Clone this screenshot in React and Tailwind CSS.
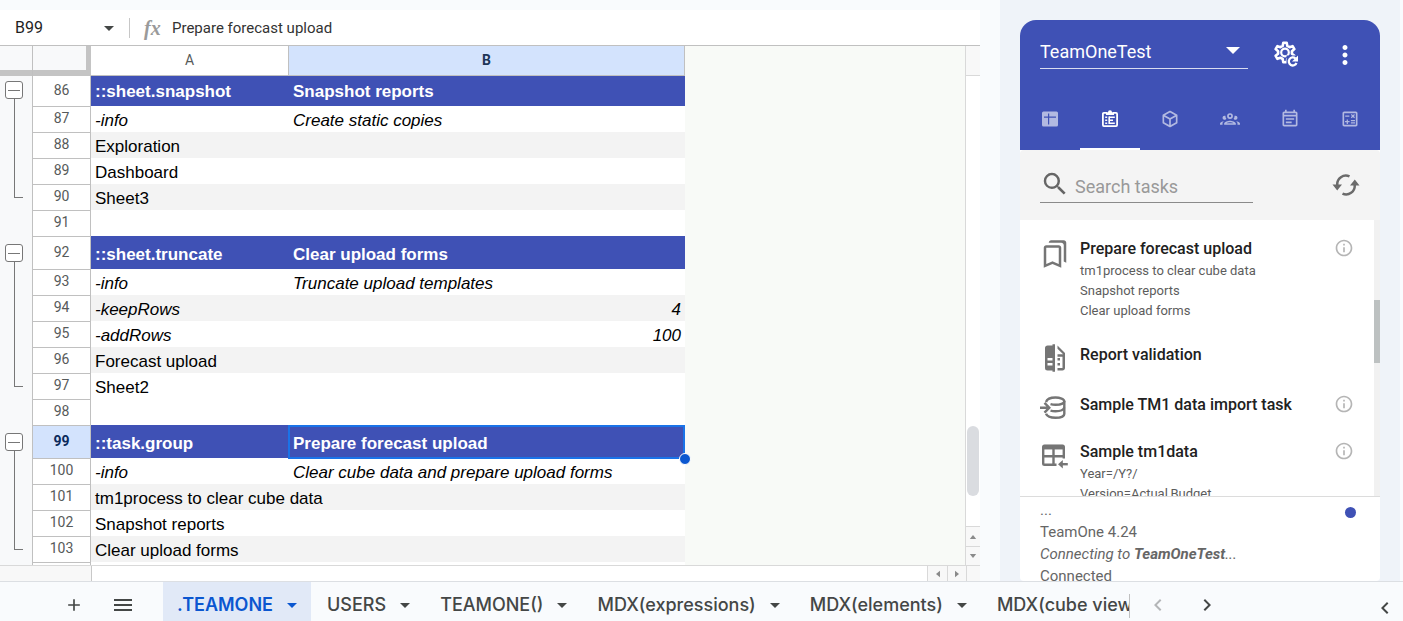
import React from "react";
import {
  MdOutlineEventNote,
  MdOutlineCalculate,
  MdSearch,
  MdOutlineBookmarks,
  MdInfoOutline,
  MdMoreVert,
  MdArrowDropDown,
  MdChevronLeft,
  MdChevronRight,
  MdAdd,
  MdMenu,
} from "react-icons/md";

const ROWS = [
  { n: 86, a: "::sheet.snapshot", b: "Snapshot reports", kind: "head", h: "h-[30px]" },
  { n: 87, a: "-info", b: "Create static copies", kind: "opt" },
  { n: 88, a: "Exploration", shade: true },
  { n: 89, a: "Dashboard" },
  { n: 90, a: "Sheet3", shade: true },
  { n: 91 },
  { n: 92, a: "::sheet.truncate", b: "Clear upload forms", kind: "head", h: "h-[33px]" },
  { n: 93, a: "-info", b: "Truncate upload templates", kind: "opt" },
  { n: 94, a: "-keepRows", b: "4", kind: "opt", num: true, shade: true },
  { n: 95, a: "-addRows", b: "100", kind: "opt", num: true },
  { n: 96, a: "Forecast upload", shade: true },
  { n: 97, a: "Sheet2" },
  { n: 98 },
  { n: 99, a: "::task.group", b: "Prepare forecast upload", kind: "head", h: "h-[33px]", active: true },
  { n: 100, a: "-info", b: "Clear cube data and prepare upload forms", kind: "opt" },
  { n: 101, a: "tm1process to clear cube data", shade: true },
  { n: 102, a: "Snapshot reports" },
  { n: 103, a: "Clear upload forms", shade: true },
];

const GROUPS = [
  { box: "h-[160px] pt-[5px]", line: "h-[99px]" },
  { box: "h-[189px] pt-2", line: "h-[125px]" },
  { box: "h-[137px] pt-2", line: "h-[99px]" },
];

function FormulaBar() {
  return (
    <div className="flex h-9 shrink-0 items-center border-b border-[#c0c0c0] bg-white font-['Roboto',sans-serif]">
      <button className="flex h-full w-[129px] items-center justify-between pl-[15px] pr-2 text-base text-[#1f1f1f]">
        B99
        <MdArrowDropDown className="size-6 text-[#444746]" />
      </button>
      <span className="h-5 w-px bg-[#c7c7c7]" />
      <span className="w-[42px] pl-[14px] font-['Liberation_Serif',serif] text-xl font-bold italic leading-none text-[#9a9a9a]">
        fx
      </span>
      <input
        aria-label="Formula"
        defaultValue="Prepare forecast upload"
        className="h-full min-w-0 flex-1 bg-transparent text-[15px] text-[#333] outline-none"
      />
    </div>
  );
}

function Gutter() {
  return (
    <div className="flex w-[33px] shrink-0 flex-col border-r border-[#c0c0c0] bg-[#f8f9fa]">
      <div className="h-[30px] border-b-[6px] border-[#c4c4c4]" />
      {GROUPS.map((g, i) => (
        <div key={i} className={"flex flex-col pl-[5px] " + g.box}>
          <button
            aria-label="Collapse group"
            className="flex size-[18px] shrink-0 items-center justify-center rounded-[3px] border border-[#777] bg-white"
          >
            <span className="h-px w-3 bg-[#777]" />
          </button>
          <span className={"ml-[9px] w-[9px] border-b border-l border-[#777] " + g.line} />
        </div>
      ))}
    </div>
  );
}

function Row({ row, first }) {
  const head = row.kind === "head";
  const tone = head
    ? "bg-[#3f51b5] font-bold text-white"
    : (row.shade ? "bg-[#f3f3f3]" : "bg-white") +
      (row.kind === "opt" ? " italic text-black" : " text-black");
  const cell = "whitespace-nowrap align-bottom leading-[22px] " + (head ? "pb-[3px] " : "");
  return (
    <tr className={(row.h || "h-[26px]") + " " + tone}>
      <th
        scope="row"
        className={
          "border-r border-[#c0c0c0] p-0 pb-[3px] text-center font-['Roboto',sans-serif] text-sm leading-5 not-italic " +
          (first ? "" : "border-t ") +
          (row.active ? "bg-[#d3e3fd] font-bold text-[#0b2a5c]" : "bg-white font-normal text-[#575a5a]")
        }
      >
        {row.n}
      </th>
      <td className={"pl-1 " + cell}>{row.a}</td>
      <td className={"relative " + cell + (row.num ? "pr-1 text-right" : "pl-1")}>
        {row.b}
        {row.active && (
          <>
            <span className="absolute -bottom-px -left-px right-0 top-0 border-2 border-[#1a73e8]" />
            <span className="absolute -bottom-[7px] -right-[6px] z-10 size-3 rounded-full border border-white bg-[#0b57d0]" />
          </>
        )}
      </td>
    </tr>
  );
}

function Sheet() {
  return (
    <section className="flex min-h-0 flex-1 flex-col">
      <div className="flex min-h-0 flex-1 overflow-hidden border-b border-[#d9d9d9]">
        <Gutter />
        <table className="w-[652px] shrink-0 table-fixed border-separate border-spacing-0 self-start font-['Liberation_Sans',sans-serif] text-[17px]">
          <colgroup>
            <col className="w-[58px]" />
            <col className="w-[198px]" />
            <col className="w-[396px]" />
          </colgroup>
          <thead>
            <tr className="h-[30px] font-['Roboto',sans-serif] text-sm">
              <th aria-label="Select all" className="border-b-[6px] border-r-[5px] border-[#c4c4c4] bg-[#f8f9fa] p-0" />
              <th className="border-b border-r border-[#c0c0c0] bg-white p-0 pb-[2px] font-normal text-[#575a5a]">A</th>
              <th className="border-b border-r border-[#c0c0c0] bg-[#d3e3fd] p-0 pb-[2px] font-bold text-[#1d3557]">B</th>
            </tr>
          </thead>
          <tbody>
            {ROWS.map((r, i) => (
              <Row key={r.n} row={r} first={i === 0} />
            ))}
            <tr className="h-[26px] bg-white">
              <th className="border-r border-t border-[#c0c0c0] p-0" />
              <td />
              <td />
            </tr>
          </tbody>
        </table>
        <div className="flex-1 border-r border-[#d9d9d9] bg-[#f8faf7]" />
        <div className="flex w-[14px] shrink-0 flex-col bg-white">
          <div className="h-[30px] border-b border-[#d9d9d9] bg-[#f8f8f8]" />
          <div className="flex flex-1 flex-col justify-end px-px pb-[30px]">
            <span className="h-[70px] rounded-full bg-[#dadce0]" />
          </div>
          <button aria-label="Scroll up" className="flex h-5 items-center justify-center border-t border-[#d9d9d9] bg-[#f8f8f8]">
            <svg viewBox="0 0 8 5" className="h-1 w-2 fill-[#8a8a8a]"><path d="M4 0 8 5H0z" /></svg>
          </button>
          <button aria-label="Scroll down" className="flex h-[19px] items-center justify-center border-t border-[#d9d9d9] bg-[#f8f8f8]">
            <svg viewBox="0 0 8 5" className="h-1 w-2 fill-[#8a8a8a]"><path d="M0 0H8L4 5z" /></svg>
          </button>
        </div>
      </div>
      <div className="flex h-[15px] shrink-0 bg-white">
        <div className="w-[92px] border-r border-[#c8c8c8] bg-[#f8f8f8]" />
        <div className="flex-1" />
        <button aria-label="Scroll left" className="flex w-5 items-center justify-center border-l border-[#d9d9d9] bg-[#f8f8f8]">
          <svg viewBox="0 0 5 8" className="h-2 w-1 fill-[#8a8a8a]"><path d="M5 0V8L0 4z" /></svg>
        </button>
        <button aria-label="Scroll right" className="flex w-5 items-center justify-center border-x border-[#d9d9d9] bg-[#f8f8f8]">
          <svg viewBox="0 0 5 8" className="h-2 w-1 fill-[#8a8a8a]"><path d="M0 0V8L5 4z" /></svg>
        </button>
        <div className="w-[13px] bg-[#f8f8f8]" />
      </div>
    </section>
  );
}

const TABS = ["USERS", "TEAMONE()", "MDX(expressions)", "MDX(elements)", "MDX(cube views)"];

function SheetTabs() {
  return (
    <footer className="flex h-10 shrink-0 items-center border-t border-[#dcdfe3] bg-[#f9fbfd] font-['Inter',sans-serif] text-lg font-medium text-[#444746]">
      <button aria-label="Add sheet" className="ml-[62px] flex h-full w-6 items-center justify-center pt-[6px]">
        <MdAdd className="size-5" />
      </button>
      <button aria-label="All sheets" className="ml-[25px] flex h-full w-6 items-center justify-center pt-[6px]">
        <MdMenu className="size-6" />
      </button>
      <div className="ml-7 flex h-full w-[966px] items-center overflow-hidden">
        <button className="flex h-full shrink-0 items-center gap-[7px] bg-[#e1e9f7] pl-[14px] pr-[7px] pt-[6px] font-semibold text-[#0b57d0]">
          .TEAMONE
          <MdArrowDropDown className="size-6" />
        </button>
        {TABS.map((t) => (
          <button key={t} className="flex h-full shrink-0 items-center gap-[7px] pl-4 pr-[7px] pt-[6px]">
            {t}
            <MdArrowDropDown className="size-6" />
          </button>
        ))}
      </div>
      <span className="mt-2 h-6 w-px bg-[#c0c0c0]" />
      <button aria-label="Previous sheets" className="ml-4 pt-[6px] text-[#b4b6b8]">
        <MdChevronLeft className="size-6" />
      </button>
      <button aria-label="Next sheets" className="ml-[25px] pt-[6px]">
        <MdChevronRight className="size-6" />
      </button>
      <button aria-label="Show side panel" className="ml-auto mr-[6px] pt-3">
        <MdChevronLeft className="size-6" />
      </button>
    </footer>
  );
}

function TableIcon() {
  return (
    <svg viewBox="0 0 20 20" className="size-5">
      <path fill="currentColor" fillRule="evenodd" d="M3.5 2.5h13A1.5 1.5 0 0 1 18 4v12a1.5 1.5 0 0 1-1.5 1.5h-13A1.5 1.5 0 0 1 2 16V4a1.5 1.5 0 0 1 1.500-1.500ZM8 4.500V7.500H4V8.700H8V15.500H9.200V8.700H16V7.500H9.200V4.500Z" />
    </svg>
  );
}

function ClipboardIcon() {
  return (
    <svg viewBox="0 0 20 20" className="size-5" fill="none" stroke="currentColor">
      <path strokeWidth="1.8" d="M7 3.900H3.900Q2.900 3.900 2.900 4.900V16.100Q2.900 17.100 3.900 17.100H16.100Q17.100 17.100 17.100 16.100V4.900Q17.100 3.900 16.100 3.900H13" />
      <path fill="currentColor" stroke="none" d="M6 6V3.200H8A2 2 0 0 1 12 3.200H14V6Z" />
      <path strokeWidth="1.600" d="M5.200 8.200H7.200M5.200 11.200H7.200M5.200 14.200H7.200M9 8.200H14.800M9 11.200H13M9 14.200H14.800" />
      <path strokeWidth="1.600" d="M9.200 7.400V15" />
    </svg>
  );
}

function CubeIcon() {
  return (
    <svg viewBox="0 0 24 24" className="size-5" fill="currentColor">
      <path d="M21,16.5C21,16.88 20.79,17.21 20.47,17.38L12.57,21.82C12.41,21.94 12.21,22 12,22C11.79,22 11.59,21.94 11.43,21.82L3.53,17.38C3.21,17.21 3,16.88 3,16.5V7.5C3,7.12 3.21,6.79 3.53,6.62L11.43,2.18C11.59,2.06 11.79,2 12,2C12.21,2 12.41,2.06 12.57,2.18L20.47,6.62C20.79,6.79 21,7.12 21,7.5V16.5M12,4.15L6.04,7.5L12,10.85L17.96,7.5L12,4.15M5,15.91L11,19.29V12.58L5,9.21V15.91M19,15.91V9.21L13,12.58V19.29L19,15.91Z" />
    </svg>
  );
}

function GroupIcon() {
  return (
    <svg viewBox="0 0 24 24" className="size-5" fill="currentColor">
      <path d="M12,5A3.5,3.5 0 0,0 8.5,8.5A3.5,3.5 0 0,0 12,12A3.5,3.5 0 0,0 15.5,8.5A3.5,3.5 0 0,0 12,5M12,7A1.5,1.5 0 0,1 13.5,8.5A1.5,1.5 0 0,1 12,10A1.5,1.5 0 0,1 10.5,8.5A1.5,1.5 0 0,1 12,7M5.5,8A2.5,2.5 0 0,0 3,10.5C3,11.44 3.53,12.25 4.29,12.68C4.65,12.88 5.06,13 5.5,13C5.94,13 6.35,12.88 6.71,12.68C7.08,12.47 7.39,12.17 7.62,11.81C6.89,10.86 6.5,9.7 6.5,8.5C6.5,8.41 6.5,8.31 6.5,8.22C6.2,8.08 5.86,8 5.5,8M18.5,8C18.14,8 17.8,8.08 17.5,8.22C17.5,8.31 17.5,8.41 17.5,8.5C17.5,9.7 17.11,10.86 16.38,11.81C16.5,12 16.63,12.15 16.78,12.3C16.94,12.45 17.1,12.58 17.29,12.68C17.65,12.88 18.06,13 18.5,13C18.94,13 19.35,12.88 19.71,12.68C20.47,12.25 21,11.44 21,10.5A2.5,2.5 0 0,0 18.5,8M12,14C9.66,14 5,15.17 5,17.5V19H19V17.5C19,15.17 14.34,14 12,14M4.71,14.55C2.78,14.78 0,15.76 0,17.5V19H3V17.07C3,16.06 3.69,15.22 4.71,14.55M19.29,14.55C20.31,15.22 21,16.06 21,17.07V19H24V17.5C24,15.76 21.22,14.78 19.29,14.55M12,16C13.53,16 15.24,16.5 16.23,17H7.77C8.76,16.5 10.47,16 12,16Z" />
    </svg>
  );
}

function CogRefreshIcon() {
  return (
    <svg viewBox="0 0 28 28" className="size-7" fill="none" stroke="#fff">
      <path strokeWidth="2.600" strokeLinejoin="round" d="M11.300 2.800h3.400l.6 3.100 2.300 1.300 3-1.100 1.800 3-2.500 2.100v2.600l2.500 2-1.800 3-3-1.100-2.300 1.300-.6 3.200h-3.400l-.6-3.200-2.300-1.300-3 1.100-1.800-3 2.500-2v-2.600L3.600 9.100l1.800-3 3 1.100 2.300-1.300Z" />
      <circle cx="13" cy="12.500" r="3.800" strokeWidth="2.200" />
      <path fill="#3f51b5" stroke="none" d="M14.500 15.500H28V28H14.500Z" />
      <path strokeWidth="2.300" d="M23.500 18.500A4 4 0 1 0 24.500 23" />
      <path fill="#fff" stroke="none" d="M26 15.500V21.500H20Z" />
    </svg>
  );
}

function RefreshIcon() {
  return (
    <svg viewBox="0 0 28 24" className="h-6 w-7" fill="none" stroke="#6b6b6b" strokeWidth="2.500">
      <path d="M17.500 3.400A8.600 8.600 0 0 0 5.300 12" />
      <path d="M10.500 20.600A8.600 8.600 0 0 0 22.700 12" />
      <path fill="#6b6b6b" stroke="none" d="M.5 11.500H10L5.200 17.500Z M27.500 12.500H18L22.800 6.500Z" />
    </svg>
  );
}

function CompareIcon() {
  return (
    <svg viewBox="0 0 24 24" className="size-[30px] fill-[#757575]">
      <path d="M10,18H6V16H10V18M10,14H6V12H10V14M10,1V2H6C4.89,2 4,2.89 4,4V20A2,2 0 0,0 6,22H10V23H12V1H10M20,8V20C20,21.11 19.11,22 18,22H14V20H18V11H14V9H18.5L14,4.5V2L20,8M16,14H14V12H16V14M16,18H14V16H16V18Z" />
    </svg>
  );
}

function ImportIcon() {
  return (
    <svg viewBox="0 0 30 30" className="size-[30px]" fill="none" stroke="#757575" strokeWidth="2.400">
      <path d="M6 9C7 6 11 4.500 15.500 4.500S24.300 6 24.300 8.200 20 11.700 15.500 11.700C13.500 11.700 12 11.500 10.500 11.100" />
      <path d="M24.300 8V21C24.300 23.300 20.500 24.800 15.500 24.800S7.200 23.500 6 20.800" />
      <path d="M24.300 14.500C23.500 17 20 18.200 15.500 18.200 13.500 18.200 12 18 10.500 17.600" />
      <path d="M0 14.700H9M4.500 9.800 9.300 14.700 4.500 19.600" />
    </svg>
  );
}

function TableArrowIcon() {
  return (
    <svg viewBox="0 0 30 30" className="size-[30px]" fill="none" stroke="#757575" strokeWidth="2.400">
      <path d="M16.500 22.800H4.500Q3.200 22.800 3.200 21.500V5Q3.200 3.700 4.500 3.700H22.500Q23.800 3.700 23.800 5V16.500" />
      <path strokeWidth="4.500" d="M3.200 5.200H23.800" />
      <path d="M3.200 14.300H23.800M13.500 5V22.800" />
      <path d="M27.800 22.200H20" />
      <path fill="#757575" stroke="none" d="M22.800 18 18 22.200 22.800 26.400Z" />
    </svg>
  );
}

const PANEL_TABS = [
  { label: "Grids", icon: <TableIcon /> },
  { label: "Tasks", icon: <ClipboardIcon />, active: true },
  { label: "Cubes", icon: <CubeIcon /> },
  { label: "Users", icon: <GroupIcon /> },
  { label: "Log", icon: <MdOutlineEventNote className="size-5" /> },
  { label: "Calculations", icon: <MdOutlineCalculate className="size-5" /> },
];

const TASKS = [
  {
    title: "Prepare forecast upload",
    notes: ["tm1process to clear cube data", "Snapshot reports", "Clear upload forms"],
    icon: <MdOutlineBookmarks className="size-[30px] text-[#757575]" />,
    info: true,
    h: "h-[106px]",
  },
  { title: "Report validation", icon: <CompareIcon />, h: "h-[50px]" },
  { title: "Sample TM1 data import task", icon: <ImportIcon />, info: true, h: "h-[47px]" },
  {
    title: "Sample tm1data",
    notes: ["Year=/Y?/", "Version=Actual,Budget"],
    icon: <TableArrowIcon />,
    info: true,
    h: "h-[90px]",
  },
];

function SidePanel() {
  return (
    <aside className="w-[403px] shrink-0 bg-[#f9fbfd] pr-[3px] font-['Roboto',sans-serif]">
      <div className="flex h-full flex-col bg-[#eff3f9] px-5 pt-5">
        <div className="flex min-h-0 flex-1 flex-col overflow-hidden rounded-b-[4px] rounded-t-2xl bg-white">
          <header className="bg-[#3f51b5] text-white">
            <div className="flex h-[70px] items-start pl-5 pt-4">
              <div className="relative flex w-52 items-center border-b border-white/80">
                <select
                  aria-label="Connection"
                  className="h-8 w-full appearance-none bg-transparent text-lg leading-8 text-white outline-none"
                >
                  <option>TeamOneTest</option>
                </select>
                <svg viewBox="0 0 14 7" className="pointer-events-none absolute right-2 top-[11px] h-[7px] w-[14px] fill-white">
                  <path d="M0 0H14L7 7z" />
                </svg>
              </div>
              <button aria-label="Refresh settings" className="ml-6 mt-1">
                <CogRefreshIcon />
              </button>
              <button aria-label="More" className="ml-[30px] mt-1">
                <MdMoreVert className="size-[30px]" />
              </button>
            </div>
            <nav className="grid h-[60px] grid-cols-6">
              {PANEL_TABS.map((t) => (
                <button
                  key={t.label}
                  aria-label={t.label}
                  className={
                    "flex items-center justify-center border-b-2 " +
                    (t.active ? "border-white text-white" : "border-transparent text-white/60")
                  }
                >
                  {t.icon}
                </button>
              ))}
            </nav>
          </header>

          <div className="flex h-[70px] shrink-0 items-start rounded-t bg-[#f4f4f4] px-5 pt-4">
            <label className="flex h-[37px] w-[213px] items-center border-b border-[#8a8a8a]">
              <MdSearch className="size-[30px] shrink-0 text-[#666]" />
              <input
                aria-label="Search tasks"
                placeholder="Search tasks"
                className="ml-[5px] mt-[6px] w-full min-w-0 bg-transparent text-lg text-[#333] outline-none placeholder:text-[#999]"
              />
            </label>
            <button aria-label="Refresh tasks" className="ml-auto mt-[7px]">
              <RefreshIcon />
            </button>
          </div>

          <div className="flex min-h-0 flex-1 overflow-hidden border-b border-[#dcdcdc]">
            <ul className="flex-1 pl-5 pt-[17px]">
              {TASKS.map((t) => (
                <li key={t.title} className={"flex items-start " + t.h}>
                  <span className={"w-10 shrink-0 " + (t.notes ? "pt-[2px]" : "")}>{t.icon}</span>
                  <div className="flex-1">
                    <h3 className="text-base font-medium leading-6 text-[#212121]">{t.title}</h3>
                    {(t.notes || []).map((n) => (
                      <p key={n} className="text-[13px] leading-5 text-[#5c5c5c]">
                        {n}
                      </p>
                    ))}
                  </div>
                  {t.info && (
                    <button aria-label="Info" className="mr-5 mt-px text-[#b5b5b5]">
                      <MdInfoOutline className="size-5" />
                    </button>
                  )}
                </li>
              ))}
            </ul>
            <div className="w-[6px] bg-[#f1f1f1] pt-20">
              <div className="h-[63px] bg-[#bdc1c1]" />
            </div>
          </div>

          <div className="flex h-[84px] shrink-0 items-start justify-between overflow-hidden pl-5 pr-6 pt-[2px] text-[15px] leading-[22px] text-[#666]">
            <div>
              <p>...</p>
              <p>TeamOne 4.24</p>
              <p className="italic">
                Connecting to <b>TeamOneTest</b>...
              </p>
              <p>Connected</p>
            </div>
            <span className="mt-2 size-[11px] rounded-full bg-[#3f51b5]" />
          </div>
        </div>
      </div>
    </aside>
  );
}

export default function App() {
  return (
    <div className="flex h-screen flex-col overflow-hidden bg-[#f9fbfd]">
      <div className="flex min-h-0 flex-1">
        <main className="mr-5 flex min-w-0 flex-1 flex-col pt-[10px]">
          <FormulaBar />
          <Sheet />
        </main>
        <SidePanel />
      </div>
      <SheetTabs />
    </div>
  );
}
